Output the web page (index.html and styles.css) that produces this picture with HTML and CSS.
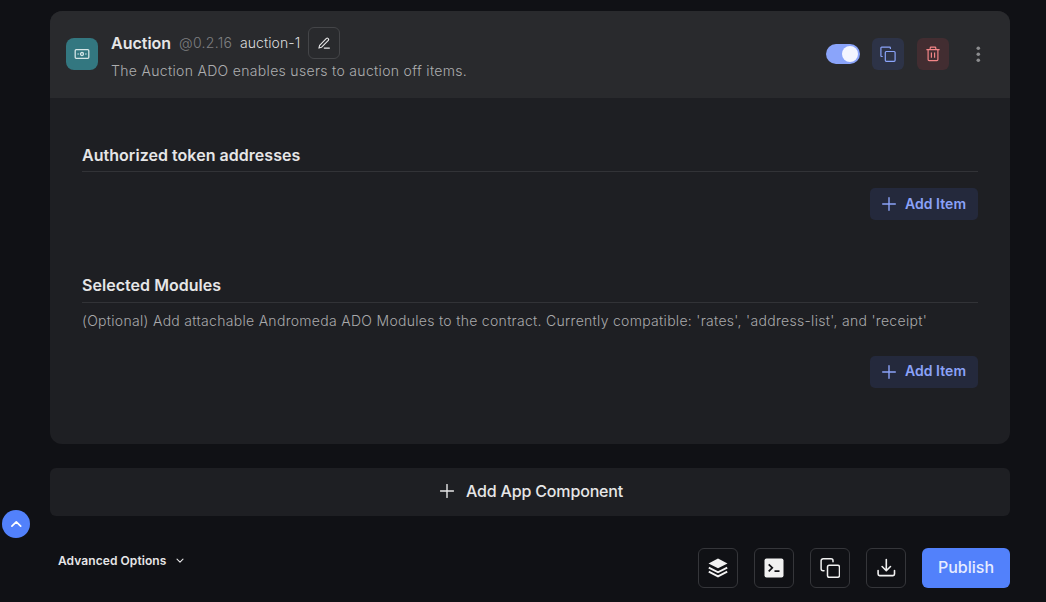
FILE: index.html
```html
<!DOCTYPE html>
<html lang="en">
<head>
<meta charset="utf-8">
<title>App Builder</title>
<link rel="stylesheet" href="styles.css">
</head>
<body>
<main class="page">
  <section class="card">
    <header class="card-header">
      <div class="badge">
        <svg width="16" height="16" viewBox="0 0 16 16" fill="none" stroke="currentColor" stroke-width="1.3"><rect x="1.2" y="3.7" width="13.6" height="8.6" rx="1"/><circle cx="8" cy="8" r="1.5"/><path d="M3.6 8h1M11.4 8h1"/></svg>
      </div>
      <div class="info">
        <div class="title-row">
          <h1 class="name">Auction</h1>
          <span class="version">@0.2.16</span>
          <span class="id">auction-1</span>
          <button class="edit" aria-label="Rename">
            <svg width="14" height="14" viewBox="0 0 16 16" fill="none" stroke="currentColor" stroke-width="1.3" stroke-linecap="round" stroke-linejoin="round"><path d="M8.300 13.800h5.900M2.200 13.800l.8-3.200 7.800-7.900a1.200 1.200 0 0 1 1.700 0l.5.5a1.200 1.200 0 0 1 0 1.700l-7.700 7.900z"/></svg>
          </button>
        </div>
        <p class="desc">The Auction ADO enables users to auction off items.</p>
      </div>
      <div class="actions">
        <span class="switch"><span class="knob"></span></span>
        <button class="action copy" aria-label="Duplicate">
          <svg width="16" height="16" viewBox="0 0 16 16" fill="none" stroke="currentColor" stroke-width="1.2" stroke-linejoin="round"><rect x="5.3" y="5.5" width="9.8" height="9.8" rx="1"/><path d="M2.7 10.5H1.6a.7.7 0 0 1-.7-.7V1.9a.7.7 0 0 1 .7-.7h8.1a.7.7 0 0 1 .7.7v1.2"/></svg>
        </button>
        <button class="action delete" aria-label="Delete">
          <svg width="16" height="16" viewBox="0 0 16 16" fill="none" stroke="currentColor" stroke-width="1.2" stroke-linejoin="round"><path d="M1.4 3.6h13.2M5.2 3.6V2a.8.8 0 0 1 .8-.8h4a.8.8 0 0 1 .8.8v1.6M3.1 3.6v10a1 1 0 0 0 1 1h7.8a1 1 0 0 0 1-1v-10M6.4 6.5v5.2M9.6 6.5v5.2"/></svg>
        </button>
        <button class="more" aria-label="More">
          <svg width="6" height="18" viewBox="0 0 6 18" fill="currentColor"><circle cx="3.300" cy="3.300" r="1.800"/><circle cx="3.300" cy="9.300" r="1.800"/><circle cx="3.300" cy="15.300" r="1.800"/></svg>
        </button>
      </div>
    </header>
    <div class="card-body">
      <section class="field">
        <h2 class="heading">Authorized token addresses</h2>
        <button class="add-item"><svg width="14" height="14" viewBox="0 0 14 14" fill="none" stroke="currentColor" stroke-width="1.4" stroke-linecap="round"><path d="M7 .7v12.6M.7 7h12.6"/></svg><span class="label">Add Item</span></button>
      </section>
      <section class="field modules">
        <h2 class="heading">Selected Modules</h2>
        <p class="hint">(Optional) Add attachable Andromeda ADO Modules to the contract. Currently compatible: 'rates', 'address-list', and 'receipt'</p>
        <button class="add-item"><svg width="14" height="14" viewBox="0 0 14 14" fill="none" stroke="currentColor" stroke-width="1.4" stroke-linecap="round"><path d="M7 .7v12.6M.7 7h12.6"/></svg><span class="label">Add Item</span></button>
      </section>
    </div>
  </section>
  <button class="add-component"><svg width="14" height="14" viewBox="0 0 14 14" fill="none" stroke="currentColor" stroke-width="1.4" stroke-linecap="round"><path d="M7 .5v13M.5 7h13"/></svg><span>Add App Component</span></button>
  <footer class="footer">
    <button class="advanced"><span>Advanced Options</span><svg width="8" height="6" viewBox="0 0 8 6" fill="none" stroke="currentColor" stroke-width="1.1" stroke-linecap="round" stroke-linejoin="round"><path d="M1 1.2l3 3 3-3"/></svg></button>
    <div class="tools">
      <button class="tool" aria-label="Templates">
        <svg width="20" height="20" viewBox="0 0 20 20"><path d="M10 .5L.5 5.400 10 10.300l9.500-4.900z" fill="currentColor"/><path d="M.8 9.600l9.200 4.700 9.200-4.700M.8 13.700l9.200 4.700 9.200-4.700" fill="none" stroke="currentColor" stroke-width="1.900"/></svg>
      </button>
      <button class="tool" aria-label="Console">
        <svg width="20" height="20" viewBox="0 0 20 20"><rect x=".5" y=".5" width="19" height="19" rx="2" fill="currentColor"/><path d="M4.700 6.300l3.600 3.500-3.600 3.500M10.500 13.200h5" fill="none" stroke="#101115" stroke-width="1.700"/></svg>
      </button>
      <button class="tool" aria-label="Copy">
        <svg width="20" height="20" viewBox="0 0 20 20" fill="none" stroke="currentColor" stroke-width="1.500" stroke-linecap="round"><rect x="7.500" y="7.200" width="12" height="12" rx="1.800"/><path d="M4 12.700H3.100a2 2 0 0 1-2-2V2.800a2 2 0 0 1 2-2H11a2 2 0 0 1 2 2v.9"/></svg>
      </button>
      <button class="tool" aria-label="Download">
        <svg width="20" height="20" viewBox="0 0 20 20" fill="none" stroke="currentColor" stroke-width="1.600" stroke-linecap="round" stroke-linejoin="round"><path d="M10.300 1.500v11M6.100 8.500l4.200 4.200 4.200-4.200M2.100 12.500v3.600a1.500 1.500 0 0 0 1.500 1.500H17a1.500 1.500 0 0 0 1.500-1.500v-3.600"/></svg>
      </button>
      <button class="publish">Publish</button>
    </div>
  </footer>
  <button class="scroll-top" aria-label="Scroll to top"><svg width="12" height="8" viewBox="0 0 12 8" fill="none" stroke="currentColor" stroke-width="1.700" stroke-linecap="round" stroke-linejoin="round"><path d="M1.900 6.200l4.400-4.300 4.400 4.300"/></svg></button>
</main>
</body>
</html>
```
FILE: styles.css
```css
* { box-sizing: border-box; }
body {
  margin: 0;
  background: #101115;
  color: #e6e6e7;
  font-family: Inter, "Liberation Sans", sans-serif;
}
h1, h2, p { margin: 0; }
button {
  display: flex;
  align-items: center;
  justify-content: center;
  padding: 0;
  border: 0;
  background: none;
  color: inherit;
  font: inherit;
}
svg { display: block; flex: none; }
.page {
  position: relative;
  height: 602px;
  padding: 11px 36px 0 50px;
  overflow: hidden;
}
.card {
  height: 433px;
  border-radius: 12px;
  background: #1e1f23;
  overflow: hidden;
}
.card-header {
  display: flex;
  align-items: center;
  height: 87px;
  padding: 0 24px 1px 16px;
  background: #292a2d;
}
.badge {
  display: flex;
  align-items: center;
  justify-content: center;
  width: 32px;
  height: 32px;
  margin-right: 13px;
  border-radius: 8px;
  background: #337780;
  color: #d5e5e6;
}
.info { height: 54px; }
.title-row {
  display: flex;
  align-items: center;
  height: 32px;
  line-height: 24px;
}
.name { width: 68px; font-size: 16px; font-weight: 600; letter-spacing: 0; }
.version { width: 61px; font-size: 14px; letter-spacing: .3px; font-weight: 350; color: #7e7f81; }
.id { width: 68px; font-size: 14px; letter-spacing: .07px; font-weight: 350; color: #dcdcdd; }
.edit {
  width: 32px;
  height: 32px;
  border: 1px solid #444548;
  border-radius: 6px;
}
.desc {
  margin-top: 1px;
  font-size: 14px;
  font-weight: 350;
  line-height: 22px;
  letter-spacing: .32px;
  white-space: nowrap;
  color: #adaeb0;
}
.actions { display: flex; align-items: center; margin-left: auto; }
.switch {
  width: 34px;
  height: 20px;
  padding: 2px;
  border-radius: 10px;
  background: #8aa4fa;
}
.knob {
  display: block;
  width: 16px;
  height: 16px;
  margin-left: auto;
  border-radius: 50%;
  background: #f3f5ff;
}
.action { width: 32px; height: 32px; border-radius: 6px; }
.copy { margin-left: 12px; background: #2d3347; color: #8ba4fa; }
.delete { margin-left: 13px; background: #422d31; color: #f38587; }
.more { width: 16px; height: 32px; margin-left: 21px; color: #8c8d8f; }
.card-body { padding: 45px 32px 0; }
.heading {
  height: 29px;
  border-bottom: 1px solid #323337;
  font-size: 16px;
  font-weight: 600;
  line-height: 24px;
  letter-spacing: .04px;
}
.add-item {
  width: 108px;
  height: 32px;
  margin: 16px 0 0 auto;
  gap: 9px;
  border-radius: 5px;
  background: #24293c;
  color: #8ba2f8;
  font-size: 14px;
  font-weight: 570;
  letter-spacing: .05px;
}
.label { padding-bottom: 2px; }
.modules { margin-top: 53px; }
.modules .heading { height: 30px; }
.modules .label { padding-bottom: 3px; }
.hint {
  margin-top: 6px;
  font-size: 14px;
  font-weight: 350;
  line-height: 24px;
  letter-spacing: .3px;
  white-space: nowrap;
  color: #a9a9ab;
}
.modules .add-item { margin-top: 23px; }
.add-component {
  width: 100%;
  height: 48px;
  margin-top: 24px;
  padding: 0 0 2px 3px;
  gap: 12px;
  border-radius: 6px;
  background: #1e1f23;
  font-size: 16px;
  font-weight: 550;
  letter-spacing: -.16px;
}
.footer {
  display: flex;
  justify-content: space-between;
  align-items: flex-start;
  margin-top: 32px;
  padding-left: 8px;
}
.advanced { height: 25px; gap: 10px; font-size: 12px; font-weight: 580; letter-spacing: .07px; }
.tools { display: flex; gap: 16px; }
.tool {
  width: 40px;
  height: 40px;
  padding-bottom: 1px;
  border: 1px solid #35363a;
  border-radius: 6px;
  color: #f1f1f1;
}
.publish {
  width: 88px;
  height: 40px;
  padding-bottom: 2px;
  border-radius: 6px;
  background: #5281fb;
  color: #e7edff;
  font-size: 16px;
  font-weight: 530;
}
.scroll-top {
  position: absolute;
  left: 2px;
  top: 510px;
  width: 28px;
  height: 28px;
  border-radius: 50%;
  background: #5281fb;
  color: #fff;
}
```
